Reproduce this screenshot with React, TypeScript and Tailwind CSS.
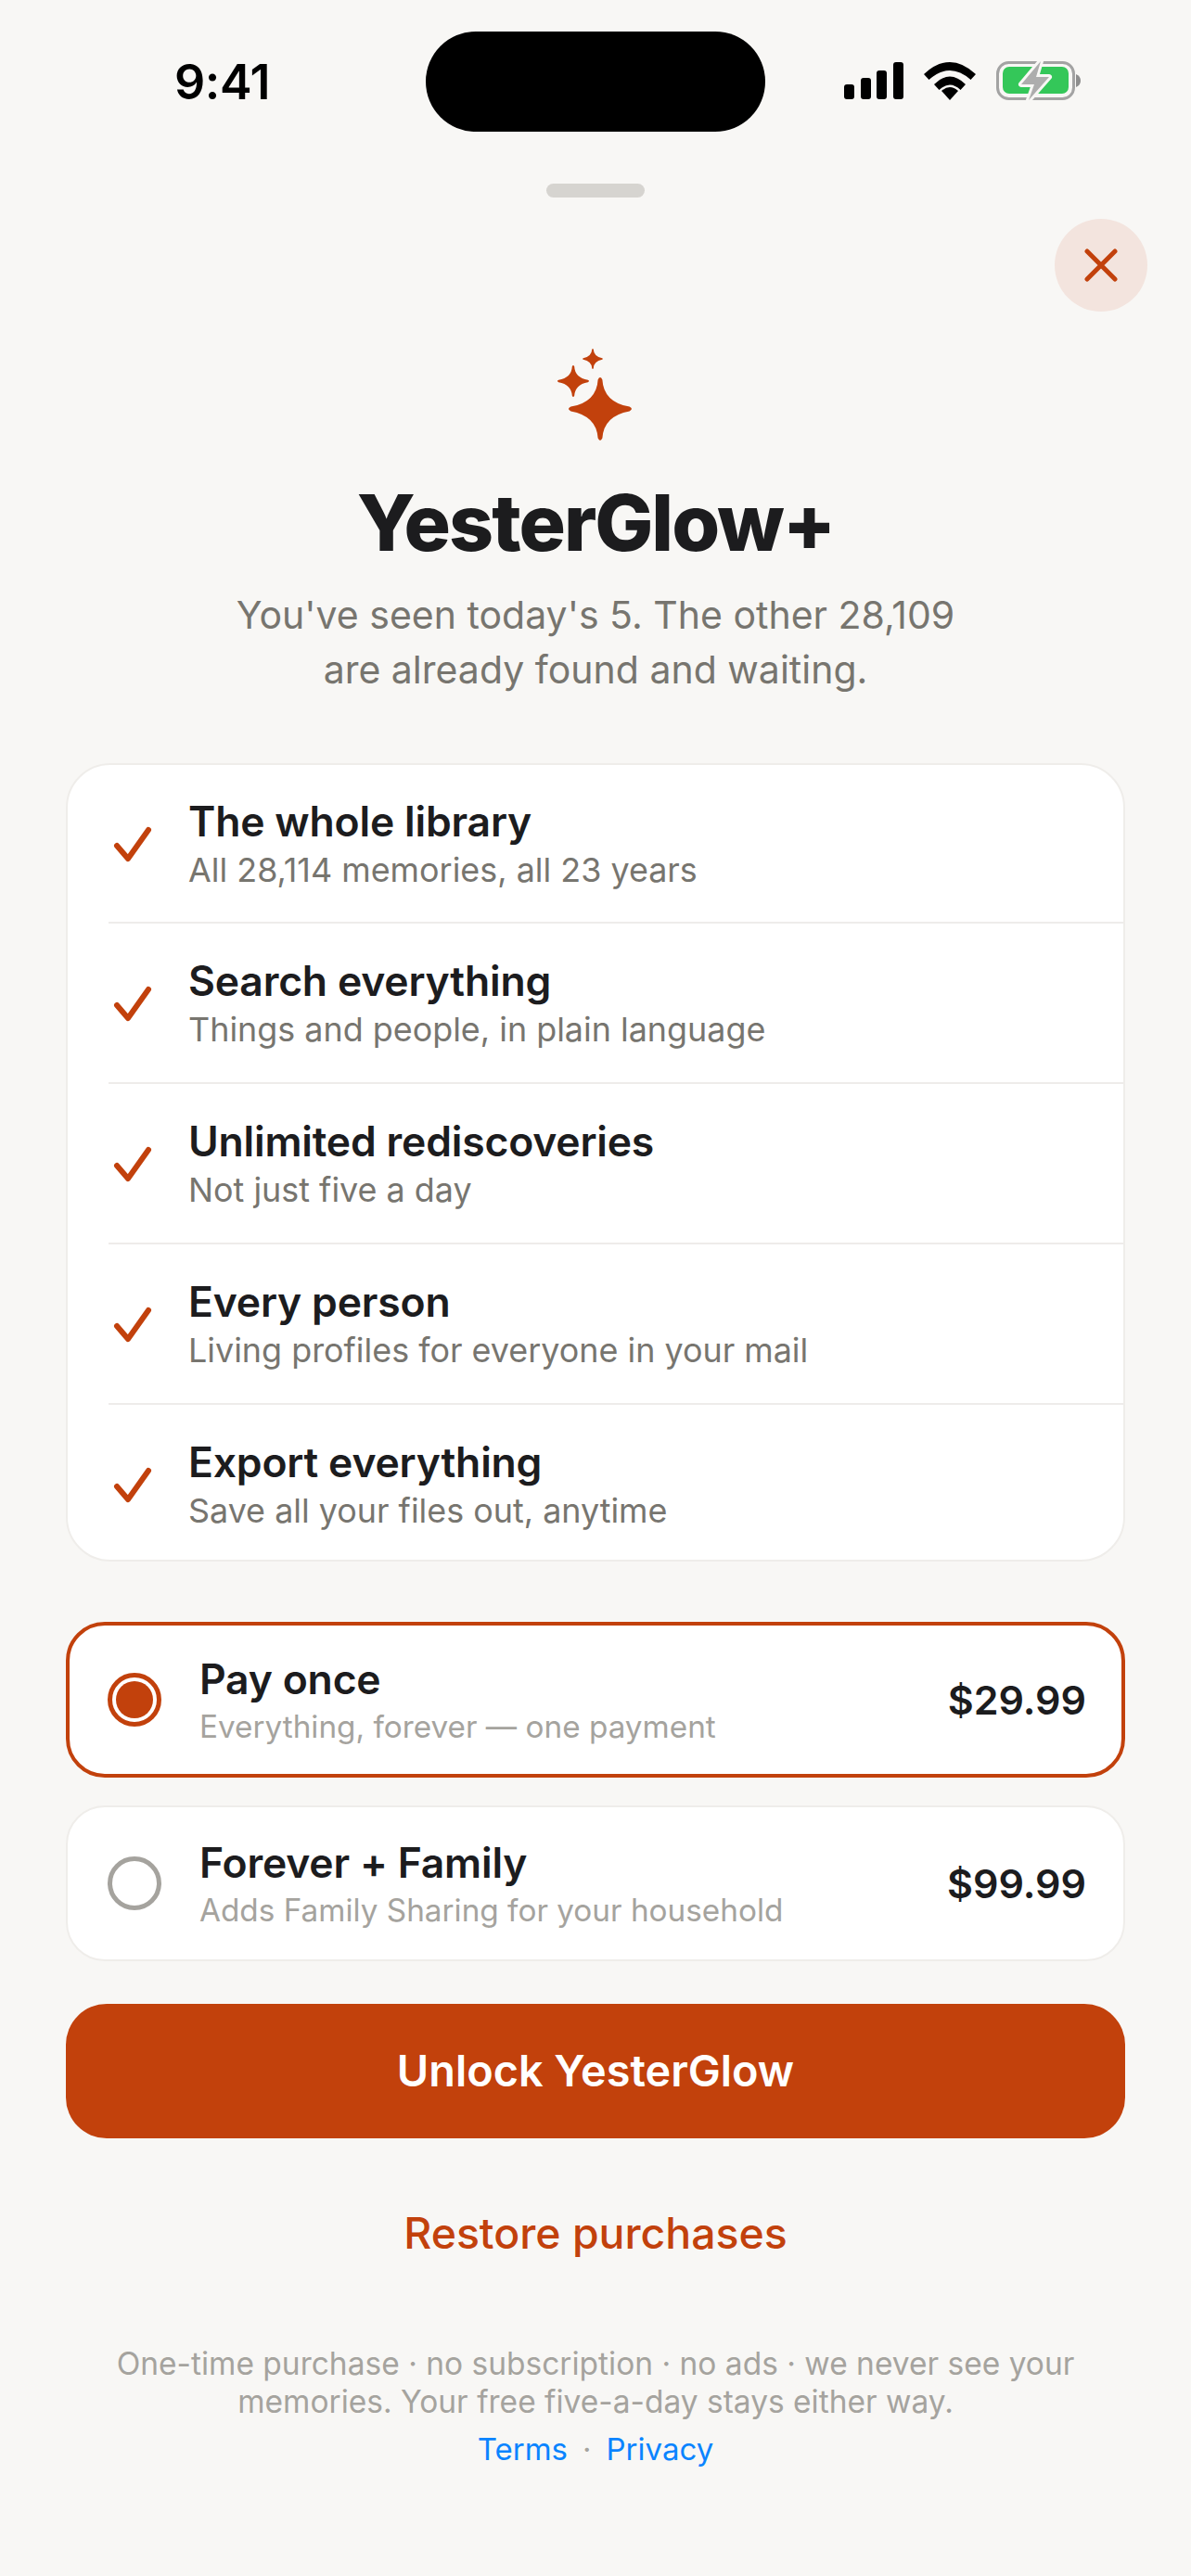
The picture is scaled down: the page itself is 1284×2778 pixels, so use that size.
import React from "react";

const features = [
  { title: "The whole library", sub: "All 28,114 memories, all 23 years" },
  { title: "Search everything", sub: "Things and people, in plain language" },
  { title: "Unlimited rediscoveries", sub: "Not just five a day" },
  { title: "Every person", sub: "Living profiles for everyone in your mail" },
  { title: "Export everything", sub: "Save all your files out, anytime" },
];

const Star = ({ cx, cy, r }: { cx: number; cy: number; r: number }) => {
  const k = r * 0.22;
  const t = r * 0.07;
  return (
    <path
      d={`M${cx - t} ${cy - r + t} Q${cx} ${cy - r - t} ${cx + t} ${cy - r + t} Q${cx + k * 0.5} ${cy - k} ${cx + r - t} ${cy - t}
      Q${cx + r + t} ${cy} ${cx + r - t} ${cy + t} Q${cx + k * 0.5} ${cy + k} ${cx + t} ${cy + r - t}
      Q${cx} ${cy + r + t} ${cx - t} ${cy + r - t} Q${cx - k * 0.5} ${cy + k} ${cx - r + t} ${cy + t}
      Q${cx - r - t} ${cy} ${cx - r + t} ${cy - t} Q${cx - k * 0.5} ${cy - k} ${cx - t} ${cy - r + t}Z`}
      fill="#c2410c"
    />
  );
};

const StatusIcons = () => (
  <div className="flex items-center">
    <svg width="64" height="40" viewBox="0 0 64 40" fill="#000">
      <rect x="0" y="24" width="11" height="16" rx="3" />
      <rect x="18" y="17" width="11" height="23" rx="3" />
      <rect x="35" y="9" width="11" height="31" rx="3" />
      <rect x="53" y="0" width="11" height="40" rx="3" />
    </svg>
    <svg className="ml-[22px]" width="56" height="41" viewBox="0 0 56 41" fill="#000">
      <path d="M0 13 Q28 -13 56 13 L50.500 19 Q28 -1 5.500 19Z" />
      <path d="M11 24 Q28 7 45 24 L39.500 30 Q28 19 16.500 30Z" />
      <path d="M19 31 Q28 23 37 31 L28 41Z" />
    </svg>
    <svg className="ml-[22px]" width="92" height="44" viewBox="0 -1 92 44">
      <rect x="1.500" y="1.500" width="82" height="39" rx="12" fill="none" stroke="#a3a3a3" strokeWidth="3" />
      <rect x="7" y="6" width="71" height="29" rx="7" fill="#34c759" />
      <path d="M86 14 Q91 16 91 21 Q91 26 86 28Z" fill="#8e8e8e" />
      <path d="M48 0 L27 25 H41 L35 42 L57 17 H43Z" fill="#adadad" stroke="#f8f7f5" strokeWidth="6" strokeLinejoin="round" paintOrder="stroke" />
    </svg>
  </div>
);

const Radio = ({ on }: { on: boolean }) =>
  on ? (
    <div className="flex h-[58px] w-[58px] shrink-0 items-center justify-center rounded-full border-[5px] border-[#c2410c]">
      <div className="h-[40px] w-[40px] rounded-full bg-[#c2410c]" />
    </div>
  ) : (
    <div className="h-[58px] w-[58px] shrink-0 rounded-full border-[5px] border-[#a5a39e]" />
  );

const Plan = ({ on, title, sub, price }: { on: boolean; title: string; sub: string; price: string }) => (
  <div
    className={
      on
        ? "flex h-[168px] items-center rounded-[42px] border-[4px] border-[#c2410c] bg-white pl-[41px] pr-[38px]"
        : "flex h-[168px] items-center rounded-[42px] border-2 border-[#efedea] bg-white pl-[43px] pr-[40px]"
    }
  >
    <Radio on={on} />
    <div className="ml-[41px] flex-1">
      <div className="text-[44.500px] leading-[54px] font-semibold tracking-[-0.2px] text-[#1c1c1e]">{title}</div>
      <div className="mt-[3px] text-[33.300px] leading-[42px] text-[#a5a39e]">{sub}</div>
    </div>
    <div className="text-[43px] font-semibold text-[#1c1c1e]">{price}</div>
  </div>
);

export default function App() {
  return (
    <div className="flex h-[2778px] w-[1284px] flex-col overflow-hidden bg-[#f8f7f5] font-['Inter',sans-serif]">
      <div className="mt-[34px] grid h-[108px] grid-cols-[1fr_366px_1fr] items-end">
        <div className="mb-[27px] pl-[188px] text-[52px] leading-[52px] font-semibold tracking-[-0.4px] text-black">9:41</div>
        <div className="h-[108px] rounded-full bg-black" />
        <div className="mb-[33px] flex justify-end pr-[118px]">
          <StatusIcons />
        </div>
      </div>

      <div className="mx-auto mt-[56px] h-[15px] w-[106px] rounded-full bg-[#d6d4d0]" />

      <div className="mt-[23px] mr-[47px] flex h-[100px] w-[100px] items-center justify-center self-end rounded-full bg-[#f3e4de]">
        <svg width="36" height="36" viewBox="0 0 36 36" fill="none" stroke="#c2410c" strokeWidth="5" strokeLinecap="round">
          <path d="M3 3 L33 33 M33 3 L3 33" />
        </svg>
      </div>

      <svg className="mx-auto mt-[35px]" width="90" height="110" viewBox="0 0 90 110">
        <Star cx={50} cy={70} r={34} />
        <Star cx={21} cy={40} r={17} />
        <Star cx={42} cy={16} r={11} />
      </svg>

      <h1 className="mt-[33px] text-center text-[84px] leading-[100px] font-extrabold tracking-[-2px] text-[#1c1c1e]">YesterGlow+</h1>
      <p className="mt-[20px] text-center text-[41px] leading-[59px] text-[#77756f]">
        You've seen today's 5. The other 28,109
        <br />
        are already found and waiting.
      </p>

      <div className="mx-[71px] mt-[71px] rounded-[48px] border-2 border-[#efedea] bg-white">
        {features.map((f, i) => (
          <div
            key={f.title}
            className={
              i === 0
                ? "relative h-[169px] pt-[34px] pl-[49px]"
                : i === 4
                  ? "relative h-[169px] pt-[37px] pl-[49px]"
                  : "relative h-[173px] pt-[37px] pl-[49px]"
            }
          >
            {i > 0 && <div className="absolute top-0 right-0 left-[44px] h-[2px] bg-[#eeecea]" />}
            <div className="flex items-center">
              <svg className="mt-[2px] shrink-0" width="44" height="44" viewBox="0 0 44 44" fill="none" stroke="#c2410c" strokeWidth="6" strokeLinecap="round" strokeLinejoin="round">
                <path d="M4 23 L16 37 L38 6" />
              </svg>
              <div className="ml-[37px]">
                <div className="text-[44.500px] leading-[54px] font-semibold tracking-[-0.2px] text-[#1c1c1e]">{f.title}</div>
                <div className="mt-[3px] text-[35.900px] leading-[44px] text-[#77756f]">{f.sub}</div>
              </div>
            </div>
          </div>
        ))}
      </div>

      <div className="mx-[71px] mt-[65px] flex flex-col gap-[30px]">
        <Plan on title="Pay once" sub="Everything, forever — one payment" price="$29.99" />
        <Plan on={false} title="Forever + Family" sub="Adds Family Sharing for your household" price="$99.99" />
      </div>

      <div className="mx-[71px] mt-[46px] flex h-[145px] items-center justify-center rounded-[44px] bg-[#c2410c] text-[46.800px] font-semibold text-white">
        Unlock YesterGlow
      </div>

      <div className="mt-[73px] text-center text-[46.400px] leading-[58px] font-medium text-[#c2410c]">Restore purchases</div>

      <p className="mt-[92px] text-center text-[33.500px] leading-[41px] text-[#a5a39e]">
        One-time purchase · no subscription · no ads · we never see your
        <br />
        memories. Your free five-a-day stays either way.
      </p>
      <div className="mt-[10px] flex justify-center gap-[16px] text-[33px] leading-[41px]">
        <span className="text-[#0a84ff]">Terms</span>
        <span className="text-[#a5a39e]">·</span>
        <span className="text-[#0a84ff]">Privacy</span>
      </div>
    </div>
  );
}
